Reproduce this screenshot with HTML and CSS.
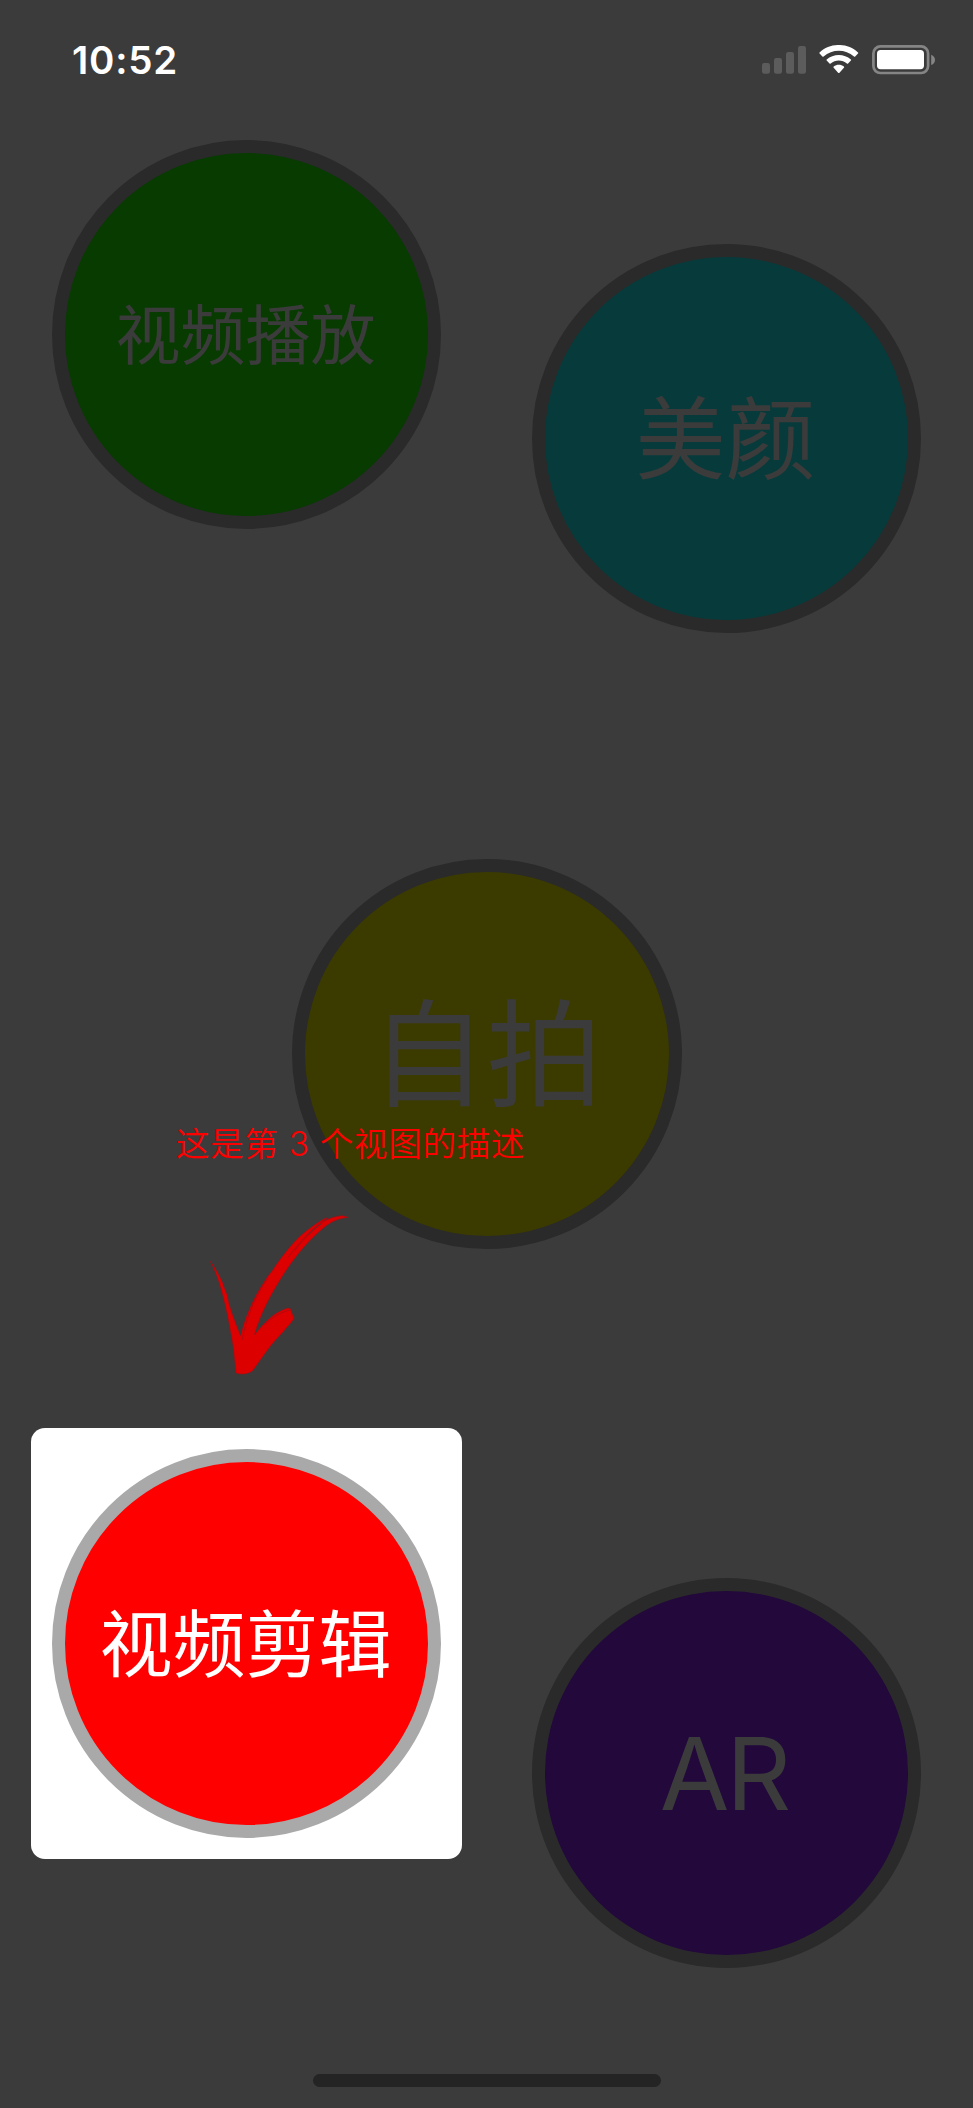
FILE: index.html
```html
<!DOCTYPE html>
<html lang="zh-CN">
<head>
<meta charset="utf-8">
<title>引导视图</title>
<link rel="stylesheet" href="styles.css">
</head>
<body>
<div class="screen">
  <header class="status">
    <span class="time">10:52</span>
    <svg class="status-icons" width="180" height="32" viewBox="0 0 180 32">
      <g fill="#5c5c5c">
        <rect x="2" y="18" width="8" height="10.7" rx="2.2"/>
        <rect x="14" y="13" width="8" height="15.7" rx="2.2"/>
        <rect x="26" y="7" width="8" height="21.7" rx="2.2"/>
        <rect x="38" y="1" width="8" height="27.7" rx="2.2"/>
      </g>
      <g fill="#fff">
        <path d="M59.6 8.6Q59 8 59.6 7.400C70 -2.500 87.600 -2.500 98 7.400Q98.600 8 98 8.600L95.200 11.400Q94.600 12 94 11.400C85.400 3.900 72.200 3.900 63.600 11.400Q63 12 62.400 11.400Z"/>
        <path d="M66.700 15.600Q66.100 15 66.700 14.400C73.300 8.400 84.300 8.400 90.900 14.400Q91.500 15 90.900 15.600L88.100 18.400Q87.500 19 86.900 18.400C82.400 14.500 75.200 14.500 70.700 18.400Q70.100 19 69.500 18.400Z"/>
        <path d="M73.700 22.700Q73 22.100 73.700 21.400C76.600 19.200 81 19.200 83.900 21.400Q84.600 22.100 83.900 22.700L79.500 27.700Q78.800 28.400 78.100 27.700Z"/>
      </g>
      <rect x="113.400" y="1.400" width="54.700" height="26.600" rx="7" fill="none" stroke="#858585" stroke-width="2.700"/>
      <rect x="117" y="5" width="47" height="19.200" rx="3.700" fill="#fff"/>
      <path d="M171.200 9.800Q175 11.500 175 14.900Q175 18.300 171.200 20Z" fill="#858585"/>
    </svg>
  </header>

  <main class="board">
    <div class="row row-top">
      <div class="circle green"><span>视频播放</span></div>
      <div class="circle teal"><span>美颜</span></div>
    </div>
    <div class="row row-middle">
      <div class="circle yellow"><span>自拍</span></div>
    </div>
    <div class="row row-bottom">
      <div class="spotlight"><div class="circle red"><span>视频剪辑</span></div></div>
      <div class="circle purple"><span>AR</span></div>
    </div>
  </main>

  <p class="hint">这是第 3 个视图的描述</p>
  <svg class="arrow" width="160" height="190" viewBox="0 0 480 570">
    <path fill="#dd0000" stroke="#a80a12" stroke-width="1.500" stroke-linejoin="round" d="M31 184C45 203 58 226 67 247C72 262 76 273 82 287L86 309C97 345 110 380 122 408C134 356 157 300 188 253C198 236 206 225 217 212C242 174 271 136 302 107C329 84 354 67 376 55L383 53L366 67C386 54 407 49 427 47L445 52C415 56 396 63 370 84C328 119 291 162 255 216C216 276 181 340 163 405C189 374 218 338 262 325L270 325L282 355L274 367L262 380C247 400 222 422 205 446C188 469 174 490 157 513C143 522 126 525 108 519C106 494 103 466 99 436C93 397 84 353 76 316C66 275 56 232 31 184Z"/>
    <g fill="none" stroke="#a80a12" stroke-linecap="round">
      <path stroke-width="2.500" d="M376 58C342 80 304 119 266 170M366 69C338 90 309 119 285 151M203 235C166 287 139 350 127 418M268 331C242 336 216 352 194 374"/>
    </g>
    <path fill="none" stroke="#3b3b3b" stroke-width="2" d="M364 71C348 82 338 91 326 104"/>
  </svg>
  <div class="home"></div>
</div>
</body>
</html>
```
FILE: styles.css
```css
body {
  margin: 0;
  background: #3b3b3b;
}

.screen {
  position: relative;
  box-sizing: border-box;
  width: 973px;
  height: 2108px;
  display: flex;
  flex-direction: column;
  overflow: hidden;
  background: #3b3b3b;
  font-family: Inter, "Noto Sans CJK SC", sans-serif;
}

.status {
  box-sizing: border-box;
  height: 140px;
  padding: 45px 33px 0 72px;
  display: flex;
  justify-content: space-between;
  align-items: flex-start;
  color: #fff;
}

.time {
  font-size: 38.5px;
  line-height: 30px;
  font-weight: 580;
  letter-spacing: 0.8px;
}

.status-icons {
  display: block;
}

.row {
  display: flex;
  justify-content: space-between;
  align-items: flex-start;
  padding: 0 52px;
}

.row-middle {
  justify-content: center;
  margin-top: 226px;
}

.row-bottom {
  margin-top: 179px;
  padding-left: 31px;
}

.circle {
  box-sizing: border-box;
  width: 389px;
  height: 389px;
  border: 13px solid #2a2a2a;
  border-radius: 50%;
  display: flex;
  align-items: center;
  justify-content: center;
  color: #3b3b3b;
  line-height: 1;
  white-space: nowrap;
}

.circle span {
  padding-top: 2px;
  margin-left: -2px;
}

.green {
  background: #073b00;
  font-size: 65px;
}

.teal {
  margin-top: 104px;
  background: #073b3b;
  font-size: 90px;
}

.yellow {
  width: 390px;
  height: 390px;
  background: #3b3b00;
  font-size: 116px;
}

.yellow span {
  margin-left: 0;
}

.spotlight {
  padding: 21px;
  border-radius: 14px;
  background: #fff;
}

.red {
  border-color: #a9a9a9;
  background: #ff0000;
  color: #fff;
  font-size: 73px;
}

.purple {
  height: 390px;
  margin-top: 150px;
  background: #22083b;
  font-size: 101px;
  letter-spacing: -3px;
}

.purple span {
  padding-top: 0;
  margin-left: -5px;
}

.hint {
  position: absolute;
  left: 176px;
  top: 1123px;
  margin: 0;
  color: #fd0000;
  font-family: Inter, "Noto Sans CJK SC DemiLight", "Noto Sans CJK SC", sans-serif;
  font-size: 33.5px;
  font-weight: 350;
  line-height: 42px;
  letter-spacing: 0.7px;
  white-space: nowrap;
}

.arrow {
  position: absolute;
  left: 200px;
  top: 1200px;
}

.home {
  width: 348px;
  height: 13px;
  margin: auto auto 21px;
  border-radius: 7px;
  background: #242424;
}
```
